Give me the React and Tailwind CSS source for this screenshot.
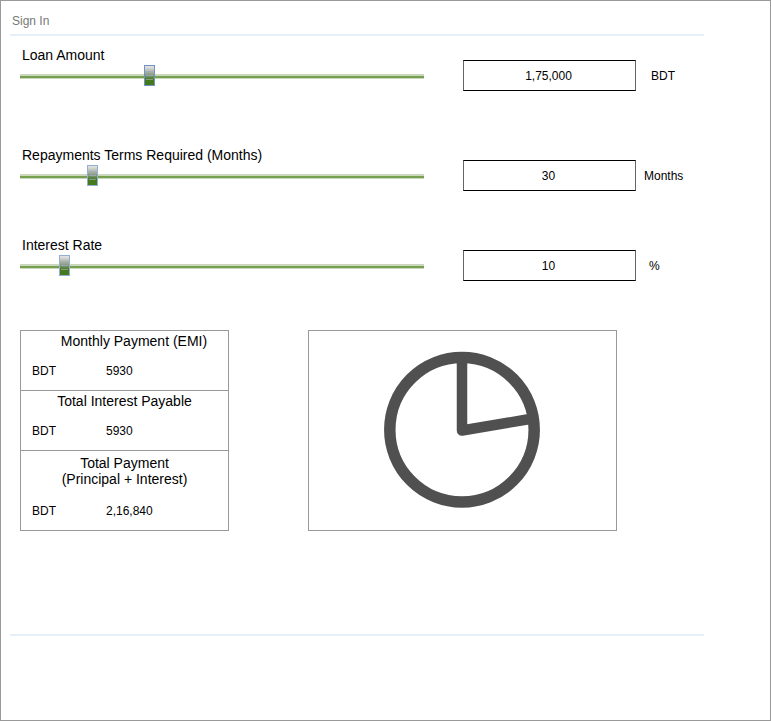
// App.jsx
// Calculadora de préstamo: sliders, resumen de pagos y gráfico.
import React from 'react';

const sliders = [
  { label: 'Loan Amount', value: '1,75,000', unit: 'BDT', unitClass: 'ml-[15px]', thumb: 124, gap: 'mb-[56px]', active: true },
  { label: 'Repayments Terms Required (Months)', value: '30', unit: 'Months', unitClass: 'ml-2', thumb: 67, gap: 'mb-[46px]' },
  { label: 'Interest Rate', value: '10', unit: '%', unitClass: 'ml-[13px]', thumb: 39, gap: 'mb-[49px]' },
];

const payments = [
  { title: ['Monthly Payment (EMI)'], value: '5930', height: 'h-[60px]', titleClass: 'pt-[2px] pl-[19px]', rowTop: 'mt-[15px]' },
  { title: ['Total Interest Payable'], value: '5930', height: 'h-[60px]', titleClass: 'pt-[2px]', rowTop: 'mt-[15px]' },
  { title: ['Total Payment', '(Principal + Interest)'], value: '2,16,840', height: 'h-[79px]', titleClass: 'pt-[4px]', rowTop: 'mt-[17px]' },
];

const Slider = ({ thumb, active }) => (
  <div className="relative h-[5px] w-[404px] bg-[#ccd8bd]">
    <div className="h-[2px] translate-y-[2px] bg-[#74a04f]" />
    <div
      className={`absolute top-[-9px] flex h-[21px] w-[11px] flex-col items-center justify-center gap-[3px] border bg-gradient-to-b from-[#e0e0e0] from-5% via-[#8d9c84] via-45% to-[#457a1c] to-70% ${active ? 'border-[#6f93c9]' : 'border-[#93aed3]'}`}
      style={{ left: thumb }}
    >
      <span className="h-px w-[7px] bg-[#a3adbb]" />
      <span className="h-px w-[7px] bg-[#9aa6b8]" />
      <span className="h-px w-[7px] bg-[#8c9a88]" />
    </div>
  </div>
);

const SliderRow = ({ label, value, unit, unitClass, thumb, gap, active }) => (
  <div className={`flex items-start ${gap}`}>
    <div className="w-[404px]">
      <div className="ml-[2px] h-[16px] text-sm leading-4 text-black">{label}</div>
      <div className="mt-[11px]">
        <Slider thumb={thumb} active={active} />
      </div>
    </div>
    <div className="ml-[39px] mt-[13px] flex h-[31px] w-[173px] items-center justify-center border border-black border-x-[#666] pr-[2px] text-xs text-black">
      {value}
    </div>
    <div className={`mt-[22px] text-xs leading-[14px] text-black ${unitClass}`}>{unit}</div>
  </div>
);

const PaymentBlock = ({ title, value, height, titleClass, rowTop }) => (
  <div className={`${height} border-b border-[#999] last:border-b-0`}>
    <div className={`${titleClass} text-center text-sm leading-4 text-black`}>
      {title.map((line) => (
        <div key={line}>{line}</div>
      ))}
    </div>
    <div className={`${rowTop} flex text-xs leading-[14px] text-black`}>
      <span className="ml-[11px] w-[74px]">BDT</span>
      <span>{value}</span>
    </div>
  </div>
);

const App = () => (
  <div className="h-[721px] w-[771px] overflow-hidden border border-[#999] bg-white pl-[9px] font-['Liberation_Sans',Arial,sans-serif]">
    <div className="w-[694px]">
      <div className="h-[35px] border-b-[2px] border-[#e6f0fa] pl-[2px] pt-[13px] text-xs leading-[14px] text-[#777]">
        Sign In
      </div>

      <div className="pl-[10px] pt-[11px]">
        {sliders.map((s) => (
          <SliderRow key={s.label} {...s} />
        ))}

        {/* Resumen y gráfico */}
        <div className="flex items-start">
          <div className="h-[201px] w-[209px] border border-[#999]">
            {payments.map((p) => (
              <PaymentBlock key={p.title[0]} {...p} />
            ))}
          </div>
          <div className="ml-[79px] flex h-[201px] w-[309px] items-center justify-center border border-[#999]">
            <svg width="160" height="160" viewBox="0 0 160 160" fill="none" stroke="#505050" strokeWidth="11.5" strokeLinejoin="round" strokeLinecap="round">
              <circle cx="79" cy="78.7" r="72.2" />
              <path d="M79 12V79.5L147 68" strokeWidth="10.5" />
            </svg>
          </div>
        </div>
      </div>

      <div className="mt-[103px] h-[2px] bg-[#e6f0fa]" />
    </div>
  </div>
);

export default App;
